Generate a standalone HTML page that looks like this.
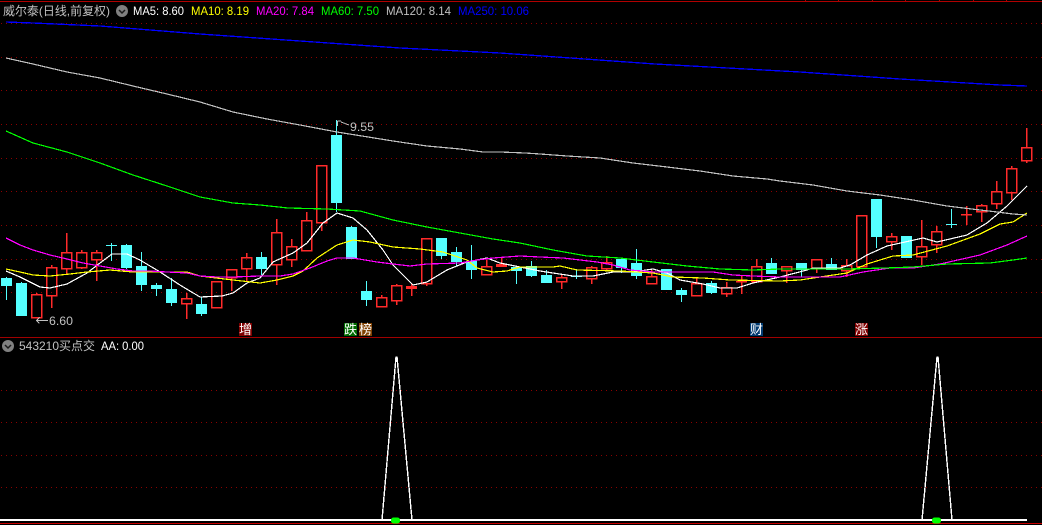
<!DOCTYPE html>
<html><head><meta charset="utf-8"><title>威尔泰</title>
<style>
html,body{margin:0;padding:0;background:#000;width:1042px;height:525px;overflow:hidden}
svg{display:block}
text{font-family:"Liberation Sans","Noto Sans CJK SC",sans-serif;font-size:12px}
.l{fill:none;stroke-width:1.2;shape-rendering:crispEdges}
.t{font-size:13px}
</style></head><body>
<svg width="1042" height="525" viewBox="0 0 1042 525" xmlns="http://www.w3.org/2000/svg">
<rect width="1042" height="525" fill="#000"/>
<!-- frame -->
<g shape-rendering="crispEdges">
<rect x="0" y="1" width="1042" height="1" fill="#b00000"/>
<path d="M805.5 0V1M838.5 0V1M872.5 0V1M905.5 0V1M939.5 0V1M973.5 0V1M1006.5 0V1" stroke="#b00000"/>
<rect x="0" y="337" width="1042" height="1" fill="#a00000"/>
<rect x="0" y="523" width="1042" height="1" fill="#c80000"/>
<!-- grid -->
<path fill="none" stroke="#8c0000" stroke-dasharray="1 4" d="M1 23.5H1042M1 57.5H1042M1 90.5H1042M1 124.5H1042M1 158.5H1042M1 191.5H1042M1 225.5H1042M1 259.5H1042M1 292.5H1042M1 390.5H1042M1 422.5H1042M1 455.5H1042M1 487.5H1042"/>
<!-- red candles -->
<path fill="none" stroke="#ff2a2a" stroke-width="1.5" d="
M36.5 293V294M31.5 294.5h10v23h-10z
M51.5 265V267M51.5 295V308M46.5 267.5h10v28h-10z
M66.5 233V252M66.5 268V275M61.5 252.5h10v16h-10z
M81.5 250V252M81.5 267V269M76.5 252.5h10v15h-10z
M96.5 250V252M96.5 259V281M91.5 252.5h10v7h-10z
M186.5 293V298M186.5 303V319M181.5 298.5h10v5h-10z
M216.5 281V282M211.5 281.5h10v26h-10z
M231.5 277V291M226.5 269.5h10v8h-10z
M246.5 253V257M246.5 268V282M241.5 257.5h10v11h-10z
M276.5 219V232M276.5 264V285M271.5 232.5h10v32h-10z
M291.5 239V246M291.5 259V267M286.5 246.5h10v13h-10z
M306.5 212V220M301.5 220.5h10v30h-10z
M321.5 222V231M316.5 165.5h10v57h-10z
M381.5 295V297M376.5 297.5h10v9h-10z
M396.5 284V285M396.5 300V305M391.5 285.5h10v15h-10z
M426.5 283V286M421.5 238.5h10v45h-10z
M486.5 260V266M486.5 274V275M481.5 266.5h10v8h-10z
M561.5 275V277M561.5 281V289M556.5 277.5h10v4h-10z
M591.5 266V267M591.5 278V284M586.5 267.5h10v11h-10z
M606.5 256V262M606.5 268V271M601.5 262.5h10v6h-10z
M651.5 270V276M646.5 276.5h10v7h-10z
M696.5 277V283M696.5 295V296M691.5 283.5h10v12h-10z
M726.5 282V287M726.5 293V297M721.5 287.5h10v6h-10z
M756.5 259V266M751.5 266.5h10v15h-10z
M786.5 270V283M781.5 266.5h10v4h-10z
M816.5 268V273M811.5 259.5h10v9h-10z
M846.5 259V265M846.5 270V277M841.5 265.5h10v5h-10z
M861.5 215V216M856.5 215.5h10v51h-10z
M891.5 233V236M891.5 241V250M886.5 236.5h10v5h-10z
M921.5 220V246M921.5 256V265M916.5 246.5h10v10h-10z
M936.5 226V231M936.5 244V253M931.5 231.5h10v13h-10z
M981.5 204V205M981.5 211V222M976.5 205.5h10v6h-10z
M996.5 181V191M996.5 203V209M991.5 191.5h10v12h-10z
M1011.5 166V168M1011.5 192V200M1006.5 168.5h10v24h-10z
M1026.5 128V147M1026.5 160V163M1021.5 147.5h10v13h-10z
M411.5 284V296M501.5 258V266M741.5 276V294M966.5 206V225
M736 281.5h11M961 214.5h11"/>
<path fill="#ff2a2a" d="M406 286h11v3h-11zM496 264h11v3h-11z"/>
<!-- cyan wicks -->
<path fill="none" stroke="#54ffff" d="M6.5 277V300M21.5 282V316M126.5 244V269M141.5 252V291M156.5 283V296M171.5 278V306M201.5 297V316M261.5 252V275M336.5 120V212M351.5 226V259M366.5 281V306M441.5 238V259M456.5 247V266M471.5 245V279M516.5 266V284M531.5 261V277M546.5 270V283M621.5 258V273M636.5 249V279M666.5 269V290M681.5 288V302M711.5 281V294M771.5 258V273M801.5 263V277M831.5 258V269M876.5 199V248M906.5 236V257
M111.5 243V261M576.5 269V279M951.5 209V228M106 245.5h11M571 276.5h11M946 224.5h11"/>
<!-- cyan bodies -->
<path fill="#54ffff" d="M1 278h11v8h-11zM16 283h11v33h-11zM121 245h11v23h-11zM136 266h11v19h-11zM151 285h11v4h-11zM166 289h11v14h-11zM196 304h11v10h-11zM256 257h11v12h-11zM331 135h11v68h-11zM346 227h11v32h-11zM361 291h11v9h-11zM436 238h11v18h-11zM451 252h11v10h-11zM466 261h11v9h-11zM511 267h11v4h-11zM526 266h11v10h-11zM541 275h11v8h-11zM616 259h11v9h-11zM631 263h11v13h-11zM661 269h11v21h-11zM676 290h11v5h-11zM706 283h11v10h-11zM766 263h11v11h-11zM796 263h11v7h-11zM826 264h11v6h-11zM871 199h11v38h-11zM901 236h11v22h-11z"/>
</g>
<!-- MA lines -->
<g>
<polyline class="l" stroke="#fff" points="6,271 20,277 40,287 50,288 67,284 87,273 100,263 112,254 127,254 140,260 160,272 180,285 200,297 222,296 233,293 247,283 260,278 273,262 293,253 307,243 323,223 337,213 353,218 367,230 383,250 393,265 413,285 427,282 447,270 467,262 487,258 500,263 520,267 540,271 553,273 573,276 593,276 613,272 633,272 653,269 667,273 680,280 703,284 720,288 737,288 753,283 780,277 807,270 813,268 840,268 850,265 867,255 887,246 923,238 937,242 967,235 987,223 1007,206 1027,186"/>
<polyline class="l" stroke="#ff0" points="6,269 20,272 33,275 50,276 70,274 87,272 110,270 133,272 160,272 187,272 200,276 233,280 260,283 277,280 293,276 303,271 317,258 337,245 353,240 370,242 393,247 420,249 443,252 467,260 477,268 493,272 507,271 520,267 553,267 560,266 577,270 620,271 653,273 673,277 703,278 730,280 780,281 800,280 820,277 847,273 867,264 893,256 913,255 947,246 980,234 1000,224 1013,222 1027,213"/>
<polyline class="l" stroke="#f0f" points="6,238 20,245 33,250 50,255 67,259 83,263 100,266 117,269 133,271 150,271 167,272 187,273 200,276 217,277 233,277 260,276 280,276 293,274 310,268 327,261 337,258 353,258 377,262 393,264 410,266 427,264 460,263 477,260 493,258 520,256 540,257 563,258 580,260 597,262 613,265 630,270 653,272 713,272 733,275 753,276 780,277 840,277 863,272 890,268 913,268 940,264 980,255 1007,245 1027,236"/>
<polyline class="l" stroke="#0f0" points="6,131 33,143 67,152 100,163 133,175 167,186 200,197 233,203 260,205 288,208 327,209 360,211 393,220 427,227 460,233 493,239 520,243 553,250 587,256 620,258 653,262 687,266 720,269 753,270 780,269 847,269 885,268 913,267 947,264 990,263 1013,260 1027,258"/>
<polyline class="l" stroke="#c0c0c0" points="6,58 33,64 67,72 100,78 133,86 167,94 200,102 233,112 267,119 300,125 337,132 393,141 427,146 460,149 483,152 500,152 525,153 540,154 567,156 600,158 633,163 667,167 700,171 733,176 767,179 780,181 813,185 847,191 880,195 913,200 947,206 980,210 997,212 1013,214 1027,215"/>
<polyline class="l" stroke="#00f" style="stroke-width:1.3" points="6,22 33,23 100,26 200,34 300,41 400,48 500,53 655,64 800,72 900,79 1000,85 1027,86"/>
</g>
<!-- annotations -->
<g fill="none" stroke="#c0c0c0" shape-rendering="crispEdges">
<path d="M337.5 121H341M337.5 121V126M341 122L349 125"/>
<path d="M36 320.5H48M36.5 320.5L39.5 317.5M36.5 320.5L39.5 323.5"/>
</g>
<text x="350" y="131" fill="#c0c0c0" textLength="24" lengthAdjust="spacingAndGlyphs">9.55</text>
<text x="49" y="325" fill="#c0c0c0" textLength="24" lengthAdjust="spacingAndGlyphs">6.60</text>
<!-- tags -->
<g shape-rendering="crispEdges">
<rect x="239" y="323" width="13" height="13" fill="#800000"/>
<rect x="344" y="323" width="13" height="13" fill="#006c00"/>
<rect x="359" y="323" width="13" height="13" fill="#804000"/>
<rect x="750" y="323" width="13" height="13" fill="#003a70"/>
<rect x="855" y="323" width="13" height="13" fill="#800000"/>
</g>
<g fill="#fff">
<text class="t" x="239" y="334">增</text>
<text class="t" x="344" y="334">跌</text>
<text class="t" x="359" y="334">榜</text>
<text class="t" x="750" y="334">财</text>
<text class="t" x="855" y="334">涨</text>
</g>
<!-- header -->
<text x="3" y="15" fill="#c0c0c0" textLength="107" lengthAdjust="spacingAndGlyphs">威尔泰(日线,前复权)</text>
<circle cx="122" cy="11" r="6" fill="#808080"/>
<path d="M119 10l3 3 3-3" fill="none" stroke="#1a1a1a" stroke-width="1.5"/>
<text x="133" y="15" fill="#fff" textLength="51" lengthAdjust="spacingAndGlyphs">MA5: 8.60</text>
<text x="191" y="15" fill="#ff0" textLength="58" lengthAdjust="spacingAndGlyphs">MA10: 8.19</text>
<text x="256" y="15" fill="#f0f" textLength="58" lengthAdjust="spacingAndGlyphs">MA20: 7.84</text>
<text x="321" y="15" fill="#0f0" textLength="58" lengthAdjust="spacingAndGlyphs">MA60: 7.50</text>
<text x="386" y="15" fill="#c0c0c0" textLength="65" lengthAdjust="spacingAndGlyphs">MA120: 8.14</text>
<text x="458" y="15" fill="#00f" textLength="71" lengthAdjust="spacingAndGlyphs">MA250: 10.06</text>
<!-- sub chart -->
<circle cx="8" cy="346" r="6" fill="#808080"/>
<path d="M5 345l3 3 3-3" fill="none" stroke="#1a1a1a" stroke-width="1.5"/>
<text x="19" y="350" fill="#c0c0c0" textLength="76" lengthAdjust="spacingAndGlyphs">543210买点交</text>
<text x="101" y="350" fill="#fff" textLength="43" lengthAdjust="spacingAndGlyphs">AA: 0.00</text>
<rect x="0" y="519" width="1027" height="2" fill="#fff" shape-rendering="crispEdges"/>
<polyline class="l" stroke="#fff" style="stroke-width:1.4" points="382,520 396,357 397,357 412,520"/>
<polyline class="l" stroke="#fff" style="stroke-width:1.4" points="922,520 937,357 938,357 952,520"/>
<rect x="391" y="517.500" width="9" height="6" rx="2.500" fill="#0f0"/>
<rect x="932" y="517.500" width="9" height="6" rx="2.500" fill="#0f0"/>
</svg>
</body></html>
